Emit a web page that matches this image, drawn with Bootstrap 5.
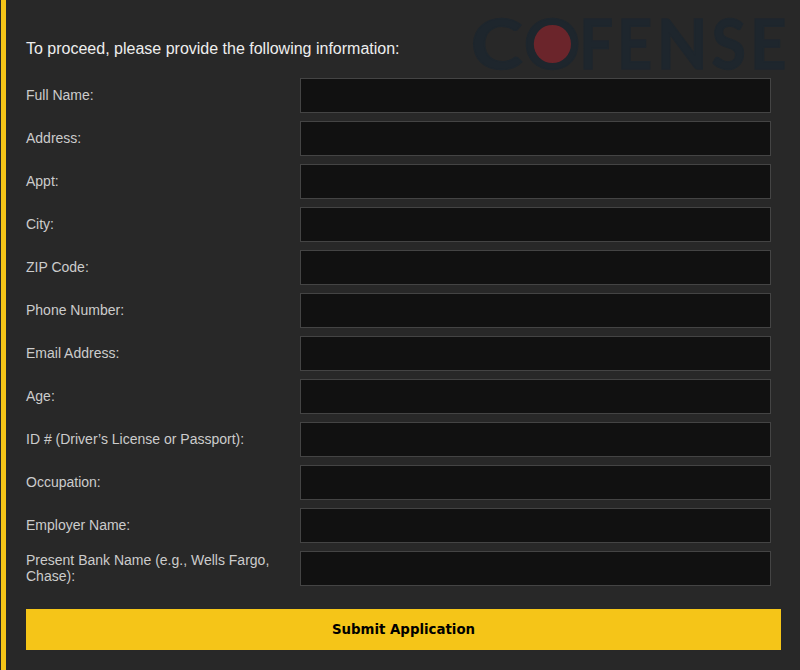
<!DOCTYPE html>
<html lang="en">
<head>
<meta charset="utf-8">
<meta name="viewport" content="width=device-width, initial-scale=1">
<title>Application</title>
<link href="https://cdn.jsdelivr.net/npm/bootstrap@5.3.0/dist/css/bootstrap.min.css" rel="stylesheet">
<style>
body{background:#282828;font-family:"Liberation Sans",Arial,sans-serif;color:#ccc;overflow:hidden}
.panel{height:670px;margin-left:1px;border-left:5px solid #f5c518;padding:39px 19px 0 20px}
.intro{font-size:16px;line-height:20px;color:#eee;margin-bottom:19px}
.fields{display:grid;row-gap:8px;padding-right:10px}
.field-row{height:35px;font-size:14px;line-height:16px}
.field-row label{width:274px;padding:0 20px 2px 0}
.field-row .form-control{height:35px;background:#111;border:1px solid #444;border-radius:0;color:#eee}
.submit{margin-top:23px;height:41px;background:#f5c518;color:#000;border:0;border-radius:0;font:bold 13.333px "DejaVu Sans",sans-serif}
.brand-mark{left:460px;top:0;pointer-events:none;z-index:-1}
.brand-mark text{font-family:Lato,sans-serif;font-weight:700;font-size:69.5px;fill:#1e262d;stroke:#1e262d;stroke-width:1.4px}
</style>
<script src="https://cdn.jsdelivr.net/npm/bootstrap@5.3.0/dist/js/bootstrap.bundle.min.js"></script>
</head>
<body class="position-relative">
<svg class="brand-mark position-absolute overflow-visible" width="340" height="100" viewBox="460 0 340 100" aria-label="Cofense">
<text transform="translate(470.8 69) scale(1.13 1)">C</text>
<text transform="translate(523.7 69) scale(1.01 1)">O</text>
<text transform="translate(579.3 69) scale(.86 1)">F</text>
<text transform="translate(617 69) scale(.88 1)">E</text>
<text transform="translate(656.8 69) scale(.95 1)">N</text>
<text transform="translate(711.5 69) scale(.9 1)">S</text>
<text transform="translate(750 69) scale(.91 1)">E</text>
<ellipse cx="552.4" cy="44" rx="18.6" ry="19.1" fill="#6b252b"/>
</svg>
<main class="panel">
<p class="intro">To proceed, please provide the following information:</p>
<form>
<div class="fields">
<div class="field-row d-flex align-items-center"><label class="flex-shrink-0" for="f1">Full Name:</label><input id="f1" class="form-control"></div>
<div class="field-row d-flex align-items-center"><label class="flex-shrink-0" for="f2">Address:</label><input id="f2" class="form-control"></div>
<div class="field-row d-flex align-items-center"><label class="flex-shrink-0" for="f3">Appt:</label><input id="f3" class="form-control"></div>
<div class="field-row d-flex align-items-center"><label class="flex-shrink-0" for="f4">City:</label><input id="f4" class="form-control"></div>
<div class="field-row d-flex align-items-center"><label class="flex-shrink-0" for="f5">ZIP Code:</label><input id="f5" class="form-control"></div>
<div class="field-row d-flex align-items-center"><label class="flex-shrink-0" for="f6">Phone Number:</label><input id="f6" class="form-control"></div>
<div class="field-row d-flex align-items-center"><label class="flex-shrink-0" for="f7">Email Address:</label><input id="f7" class="form-control"></div>
<div class="field-row d-flex align-items-center"><label class="flex-shrink-0" for="f8">Age:</label><input id="f8" class="form-control"></div>
<div class="field-row d-flex align-items-center"><label class="flex-shrink-0" for="f9">ID # (Driver’s License or Passport):</label><input id="f9" class="form-control"></div>
<div class="field-row d-flex align-items-center"><label class="flex-shrink-0" for="f10">Occupation:</label><input id="f10" class="form-control"></div>
<div class="field-row d-flex align-items-center"><label class="flex-shrink-0" for="f11">Employer Name:</label><input id="f11" class="form-control"></div>
<div class="field-row d-flex align-items-center"><label class="flex-shrink-0" for="f12">Present Bank Name (e.g., Wells Fargo, Chase):</label><input id="f12" class="form-control"></div>
</div>
<button type="button" class="submit btn w-100 d-block">Submit Application</button>
</form>
</main>
</body>
</html>
